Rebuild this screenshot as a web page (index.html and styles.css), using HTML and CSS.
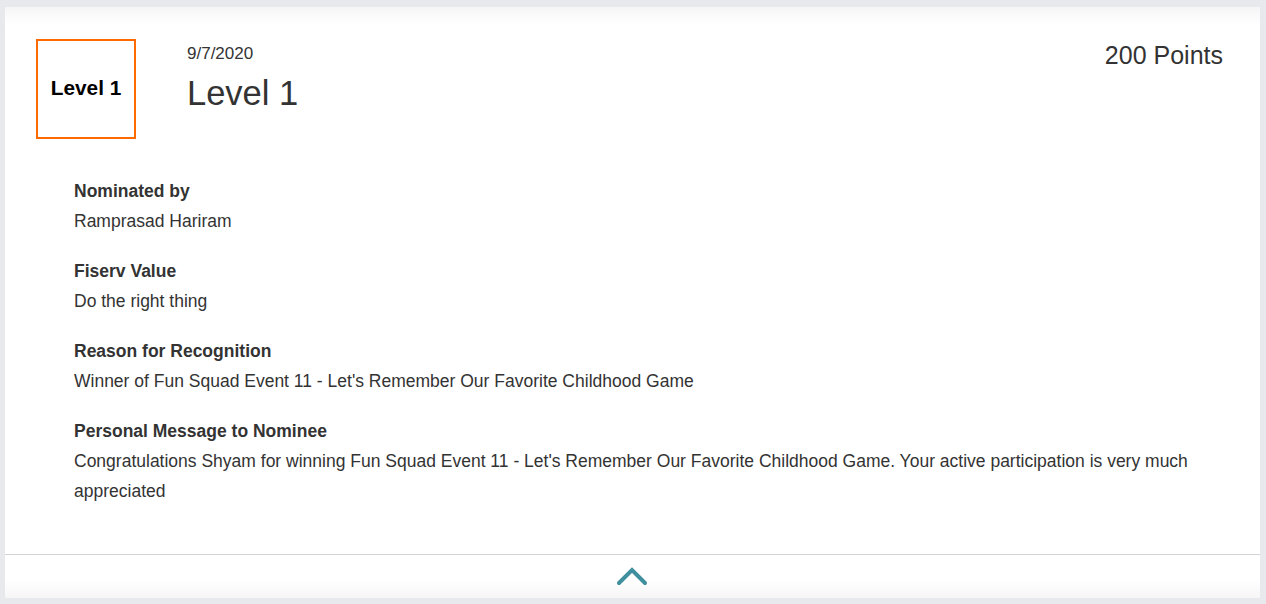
FILE: index.html
```html
<!DOCTYPE html>
<html>
<head>
<meta charset="utf-8">
<link rel="stylesheet" href="styles.css">
</head>
<body>
<div class="page">
  <div class="card">
    <div class="header">
      <div class="badge">Level 1</div>
      <div class="title-block">
        <div class="date">9/7/2020</div>
        <div class="title">Level 1</div>
      </div>
      <div class="points">200 Points</div>
    </div>
    <div class="details">
      <div class="field">
        <div class="label">Nominated by</div>
        <div class="value">Ramprasad Hariram</div>
      </div>
      <div class="field">
        <div class="label">Fiserv Value</div>
        <div class="value">Do the right thing</div>
      </div>
      <div class="field">
        <div class="label">Reason for Recognition</div>
        <div class="value">Winner of Fun Squad Event 11 - Let's Remember Our Favorite Childhood Game</div>
      </div>
      <div class="field">
        <div class="label">Personal Message to Nominee</div>
        <div class="value">Congratulations Shyam for winning Fun Squad Event 11 - Let's Remember Our Favorite Childhood Game. Your active participation is very much appreciated</div>
      </div>
    </div>
    <div class="footer">
      <svg class="chevron" width="32" height="20" viewBox="0 0 32 20">
        <polyline points="3,16 16,3 29,16" fill="none" stroke="#3f8f9f" stroke-width="4" stroke-linecap="round" stroke-linejoin="miter"/>
      </svg>
    </div>
  </div>
</div>
</body>
</html>
```

FILE: styles.css
```css
html, body {
  margin: 0;
  padding: 0;
  background: #e8e9ec;
}
body {
  font-family: "Liberation Sans", Arial, sans-serif;
  color: #333;
}
.page {
  padding: 7px 6px 6px 5px;
}
.card {
  background: linear-gradient(#f5f5f6 0, #ffffff 18px, #ffffff calc(100% - 18px), #f6f6f7 100%);
  height: 591px;
  box-sizing: border-box;
  padding-top: 32px;
  display: flex;
  flex-direction: column;
}
.header {
  display: flex;
  align-items: flex-start;
  padding: 0 37px 0 31px;
}
.badge {
  width: 100px;
  height: 100px;
  box-sizing: border-box;
  border: 2px solid #ff6a00;
  display: flex;
  align-items: center;
  justify-content: center;
  font-weight: bold;
  font-size: 20.8px;
  color: #000;
  padding-bottom: 2px;
}
.title-block {
  margin-left: 51px;
  flex: 1;
}
.date {
  font-size: 17px;
  line-height: 20px;
  margin-top: 5px;
}
.title {
  font-size: 34.5px;
  line-height: 40px;
  margin-top: 9px;
}
.points {
  font-size: 25px;
  line-height: 30px;
  margin-top: 1px;
}
.details {
  padding: 37px 40px 0 69px;
  flex: 1;
  font-size: 17.5px;
  line-height: 30px;
}
.field {
  margin-bottom: 20px;
}
.label {
  font-weight: bold;
}
.footer {
  border-top: 1px solid #d3d3d3;
  height: 43px;
  display: flex;
  align-items: center;
  justify-content: center;
}
.chevron {
  display: block;
  margin-left: -2px;
  margin-top: 1px;
}
```
